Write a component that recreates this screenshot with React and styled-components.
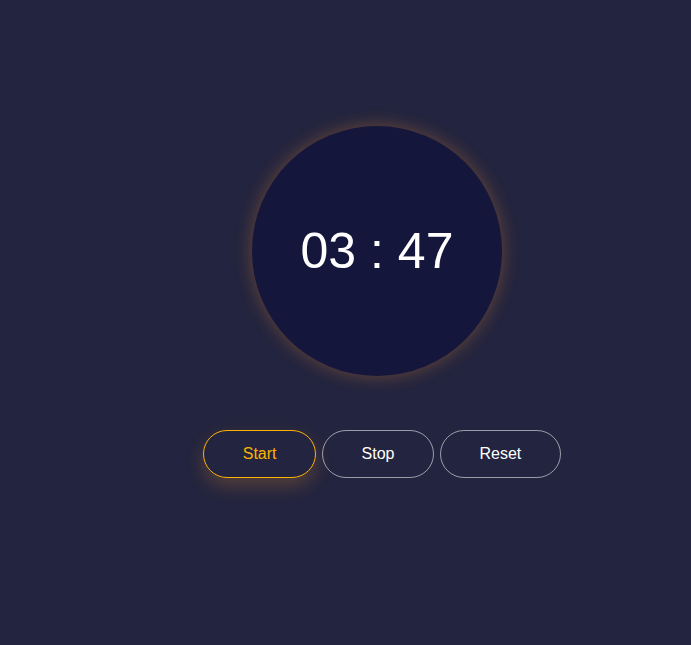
import React, { useState } from 'react';
import styled, { createGlobalStyle } from 'styled-components';

const GlobalStyle = createGlobalStyle`
  html, body {
    margin: 0;
    padding: 0;
    background: #23243f;
    font-family: 'Liberation Sans', Arial, sans-serif;
  }
`;

const Page = styled.div`
  min-height: 645px;
  box-sizing: border-box;
  display: flex;
  flex-direction: column;
  align-items: center;
  padding: 126px 0 0 63px;
`;

const Dial = styled.div`
  width: 250px;
  height: 250px;
  border-radius: 50%;
  background: #15163b;
  display: flex;
  align-items: center;
  justify-content: center;
  box-shadow: 0 0 18px rgba(255, 150, 40, 0.32);
`;

const Time = styled.span`
  color: #ffffff;
  font-size: 50px;
  letter-spacing: 0;
`;

const Controls = styled.div`
  display: flex;
  gap: 6px;
  margin-top: 54px;
  margin-left: 10px;
`;

const Button = styled.button`
  height: 48px;
  padding: 0 38.5px;
  border-radius: 24px;
  background: transparent;
  font-family: 'Liberation Sans', Arial, sans-serif;
  font-size: 16px;
  cursor: pointer;
  color: ${(p) => (p.$active ? '#ffb300' : '#ffffff')};
  border: 1px solid ${(p) => (p.$active ? '#ffb300' : 'rgba(255, 255, 255, 0.55)')};
  box-shadow: ${(p) => (p.$active ? '0 8px 18px rgba(255, 160, 40, 0.22)' : 'none')};
`;

const App = () => {
  const [active, setActive] = useState('Start');

  return (
    <>
      <GlobalStyle />
      <Page>
        <Dial>
          <Time>03 : 47</Time>
        </Dial>
        <Controls>
          {['Start', 'Stop', 'Reset'].map((label) => (
            <Button key={label} $active={active === label} onClick={() => setActive(label)}>
              {label}
            </Button>
          ))}
        </Controls>
      </Page>
    </>
  );
};

export default App;
